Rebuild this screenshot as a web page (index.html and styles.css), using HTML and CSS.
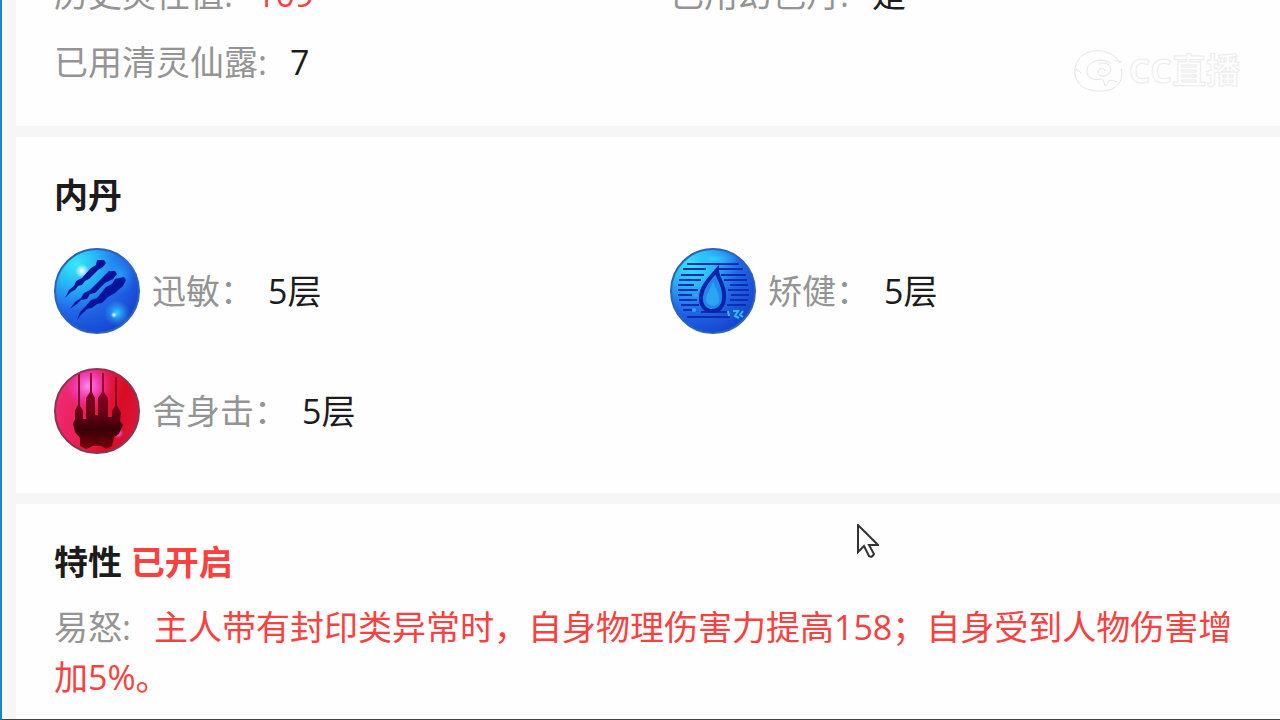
FILE: index.html
```
<!DOCTYPE html>
<html lang="zh-CN">
<head>
    <meta charset="UTF-8">
    <meta name="viewport" content="width=device-width, initial-scale=1.0">
    <title>召唤兽</title>
    <link rel="stylesheet" href="styles.css">
</head>
<body>
    <main class="page">
        <section class="card scrolled">
            <div class="grid stats">
                <div class="stat"><span class="label">历史灵性值:</span><span class="value red">109</span></div>
                <div class="stat"><span class="label">已用幻色丹:</span><span class="value">是</span></div>
                <div class="stat"><span class="label">已用清灵仙露:</span><span class="value">7</span></div>
            </div>
        </section>

        <section class="card">
            <h2>内丹</h2>
            <div class="grid orbs">
                <div class="orb">
                    <svg class="orb-icon" viewBox="0 0 86 86" aria-hidden="true">
                        <defs>
                            <radialGradient id="blue" cx="0.25" cy="0.18" r="0.85">
                                <stop offset="0" stop-color="#35eaf8"/>
                                <stop offset="0.3" stop-color="#27b8f6"/>
                                <stop offset="0.65" stop-color="#2068e8"/>
                                <stop offset="1" stop-color="#1848d2"/>
                            </radialGradient>
                            <radialGradient id="shine">
                                <stop offset="0" stop-color="#fff"/>
                                <stop offset="1" stop-color="#fff" stop-opacity="0"/>
                            </radialGradient>
                            <radialGradient id="glow">
                                <stop offset="0" stop-color="#2fd0fa"/>
                                <stop offset="1" stop-color="#2fa0fa" stop-opacity="0"/>
                            </radialGradient>
                        </defs>
                        <circle cx="43" cy="43" r="42" fill="url(#blue)" stroke="#2d62b8" stroke-width="2"/>
                        <ellipse cx="67" cy="27" rx="15" ry="20" fill="url(#glow)" opacity="0.5"/>
                        <circle cx="63" cy="65" r="13" fill="url(#glow)"/>
                        <circle cx="28" cy="23" r="7" fill="url(#shine)"/>
                        <circle cx="60" cy="67" r="3" fill="url(#shine)"/>
                        <g fill="#06149c">
                            <path d="M43 12h7l2 3-3 4-5 3-9 9-4 2-3 4-4 1-3 4-4 2-6 6 4-8 5-4 2-5 6-3 9-10 5-3z"/>
                            <path d="M55 23h6l2 3-4 5-8 4-10 10-5 1-3 5-6 1-4 4-7 5 5-7 6-4 3-5 6-3 10-10 4-4z"/>
                            <path d="M61 31l9-2 2 3-3 6-8 7-7 4-6 6-5 1-5 4-5 1-6 6-4 5 3-8 6-6 5-6 6-2 9-11 6-3z"/>
                        </g>
                    </svg>
                    <span class="label">迅敏：</span><span class="value">5层</span>
                </div>
                <div class="orb">
                    <svg class="orb-icon" viewBox="0 0 86 86" aria-hidden="true">
                        <circle cx="43" cy="43" r="42" fill="url(#blue)" stroke="#2d62b8" stroke-width="2"/>
                        <ellipse cx="44" cy="11" rx="25" ry="9" fill="url(#glow)"/>
                        <path d="M17 16H69M13 21H36M49 21H73M11 27H34M51 27H76M9 32H31M54 32H77M8 37H24M60 37H78M8 42H28M58 42H79M8 47H22M61 47H79M9 52H27M60 52H78M11 57H29M57 57H76M13 62H24M31 64H58M17 69H60" fill="none" stroke="#0b2dae" stroke-width="2"/>
                        <path d="M47 22c0 9 8 14 7 27 0 9-5 14-12 14s-12-6-11-15c1-9 7-16 16-26z" fill="#2088ed" stroke="#0823a6" stroke-width="4"/>
                        <path d="M43 34c4 8 7 14 6 20-2 5-11 5-13-1 0-6 4-12 7-19z" fill="#2ba5f0"/>
                        <circle cx="27" cy="36" r="2" fill="#35b6f5"/>
                        <circle cx="26" cy="47" r="2" fill="#35a6f5"/>
                        <circle cx="24" cy="62" r="2" fill="#35a6f5"/>
                        <path d="M58 63l1 5M63 63h5l-3 5 4 2M73 63l-3 4 3 2" fill="none" stroke="#35b9ee" stroke-width="2"/>
                    </svg>
                    <span class="label">矫健：</span><span class="value">5层</span>
                </div>
                <div class="orb">
                    <svg class="orb-icon" viewBox="0 0 86 86" aria-hidden="true">
                        <defs>
                            <linearGradient id="red" x1="0" y1="0.3" x2="1" y2="0.6">
                                <stop offset="0" stop-color="#ee2c78"/>
                                <stop offset="0.45" stop-color="#ec1c50"/>
                                <stop offset="0.75" stop-color="#da0b24"/>
                                <stop offset="1" stop-color="#d81738"/>
                            </linearGradient>
                            <radialGradient id="pink">
                                <stop offset="0" stop-color="#fb8cf2"/>
                                <stop offset="0.5" stop-color="#f03fc0" stop-opacity="0.8"/>
                                <stop offset="1" stop-color="#e82888" stop-opacity="0"/>
                            </radialGradient>
                            <linearGradient id="claw" x1="0" y1="0" x2="0" y2="1">
                                <stop offset="0" stop-color="#a00a30"/>
                                <stop offset="0.5" stop-color="#6c0018"/>
                                <stop offset="0.75" stop-color="#3a0006"/>
                                <stop offset="1" stop-color="#78000c"/>
                            </linearGradient>
                            <clipPath id="ball"><circle cx="43" cy="43" r="41"/></clipPath>
                        </defs>
                        <circle cx="43" cy="43" r="42" fill="url(#red)" stroke="#8c3450" stroke-width="2"/>
                        <g clip-path="url(#ball)">
                            <circle cx="34" cy="18" r="25" fill="url(#pink)"/>
                            <circle cx="64" cy="65" r="6" fill="url(#pink)"/>
                        </g>
                        <path fill="url(#claw)" d="M24 6h2v32l3 5v8h3V30l4-6V5h2v19l3 6v17h3V30l4-6V5h2v19l4 6v19h4v-6l3-5V9h2v28l4 8-1 8 3 4-4 9-5 3-2 9-6 3-5-3H39l-7 3-6-3v-8l-5-6-2-8 2-5v-9l3-5z"/>
                    </svg>
                    <span class="label">舍身击：</span><span class="value">5层</span>
                </div>
            </div>
        </section>

        <section class="card last">
            <h2>特性 <span class="red">已开启</span></h2>
            <p class="trait"><span class="label">易怒:</span><span class="value red">主人带有封印类异常时，自身物理伤害力提高158；自身受到人物伤害增加5%。</span></p>
        </section>
    </main>

    <!-- stream watermark -->
    <div class="watermark">
        <svg class="watermark-icon" viewBox="0 0 52 44" aria-hidden="true">
            <g fill="none" stroke="#e6e6e6">
                <path d="M47 15C40 1 16-2 6 11c-8 11-4 26 8 30 8 3 20 3 27-1 7-4 9-12 7-19"/>
                <path d="M38 16c-7-7-23-4-24 6-1 8 7 11 15 9M26 16c8-3 13 1 11 8-3 6-12 5-12 0 0-4 6-5 7-1M30 31l2 7 5-6 8 2"/>
                <path d="M3 21l5 4M42 12l7 2"/>
            </g>
        </svg>
        <span>CC直播</span>
    </div>

    <svg class="cursor" viewBox="0 0 22 34" aria-hidden="true">
        <path d="M1 1v27l6-6 5 10q3 2 5-2l-5-9h9z" fill="#fff" stroke="#333" stroke-width="2"/>
    </svg>
</body>
</html>
```
FILE: styles.css
```
* {
    margin: 0;
    padding: 0;
    box-sizing: border-box;
}

body {
    font-family: "Open Sans", "Noto Sans CJK SC", sans-serif;
    font-size: 34px;
    line-height: 50px;
    color: #1c1c1c;
    background: #f6f6f6;
    height: 100vh;
    overflow: hidden;
    border-left: 2px solid #1a86bd;
    border-bottom: 1px solid #444;
}

.page {
    display: flex;
    flex-direction: column;
    gap: 11px;
    height: 100%;
    padding-left: 14px;
    overflow: hidden;
}

.card {
    flex-shrink: 0;
    background: #fefefe;
    padding: 34px 38px 39px;
}

/* the page is scrolled part way through this card */
.card.scrolled {
    margin-top: -65px;
}

.card.last {
    flex-grow: 1;
}

h2 {
    font-size: 34px;
    line-height: 48px;
    font-weight: bold;
}

.grid {
    display: grid;
    grid-template-columns: 1fr 1fr;
    column-gap: 44px;
}

.stats {
    row-gap: 18px;
}

.stat .value,
.trait .value {
    margin-left: 23px;
}

.orbs {
    row-gap: 34px;
    margin-top: 29px;
}

.orb {
    display: flex;
    align-items: center;
}

.orb-icon {
    width: 86px;
    height: 86px;
    margin-right: 12px;
}

.orb .value {
    margin-left: 14px;
}

.label {
    color: #949494;
}

.red {
    color: #fb4040;
}

.trait {
    margin-top: 16px;
}

.watermark {
    position: absolute;
    top: 48px;
    right: 40px;
    display: flex;
    align-items: center;
    gap: 4px;
    font-size: 34px;
    line-height: 44px;
    font-weight: bold;
    color: #fefefe;
    -webkit-text-stroke: 1px #ececec;
}

.watermark-icon {
    width: 52px;
    height: 44px;
}

.cursor {
    position: absolute;
    left: 857px;
    top: 524px;
    width: 22px;
    height: 34px;
}
```
